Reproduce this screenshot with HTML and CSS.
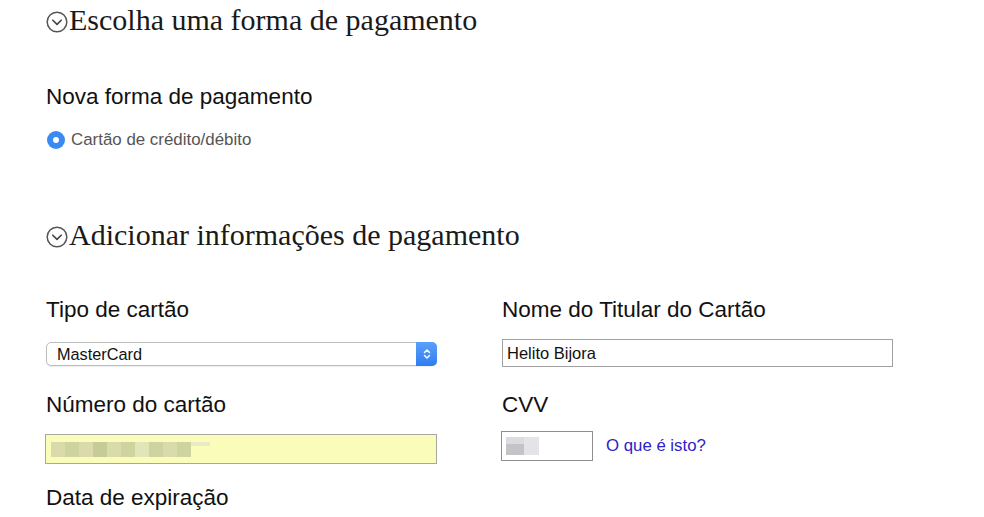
FILE: index.html
```html
<!DOCTYPE html>
<html lang="pt">
<head>
<meta charset="utf-8">
<link rel="stylesheet" href="styles.css">
</head>
<body>
<div class="page">
  <h2 class="section-title"><svg class="chev" viewBox="0 0 22 22"><circle cx="11" cy="11" r="9.8"/><path d="M6.8 9.2 L11 13.4 L15.2 9.2"/></svg>Escolha uma forma de pagamento</h2>
  <h3 class="sub">Nova forma de pagamento</h3>
  <label class="radio-row"><span class="radio"><span class="dot"></span></span>Cartão de crédito/débito</label>

  <h2 class="section-title second"><svg class="chev" viewBox="0 0 22 22"><circle cx="11" cy="11" r="9.8"/><path d="M6.8 9.2 L11 13.4 L15.2 9.2"/></svg>Adicionar informações de pagamento</h2>

  <div class="grid">
    <div class="field f-top">
      <div class="label">Tipo de cartão</div>
      <div class="select"><span class="sel-text">MasterCard</span><span class="sel-btn"><svg viewBox="0 0 10 14"><path d="M2.5 5.5 L5 3 L7.5 5.5 M2.5 8.5 L5 11 L7.5 8.5"/></svg></span></div>
    </div>
    <div class="field f-top">
      <div class="label">Nome do Titular do Cartão</div>
      <div class="input name">Helito Bijora</div>
    </div>
    <div class="field f-mid">
      <div class="label">Número do cartão</div>
      <div class="input card"><span class="blur b1"></span><span class="blur b2"></span><span class="blur b1"></span><span class="blur b3"></span><span class="blur b1"></span><span class="blur b2"></span><span class="blur b5"></span><span class="blur b2"></span><span class="blur b1"></span><span class="blur b2"></span><span class="blur b4"></span></div>
    </div>
    <div class="field f-mid">
      <div class="label">CVV</div>
      <div class="cvv-row"><div class="input cvv"><span class="cblur"><span class="cb-l"></span><span class="cb-r"></span></span></div><a class="link" href="#">O que é isto?</a></div>
    </div>
    <div class="field">
      <div class="label">Data de expiração</div>
    </div>
  </div>
</div>
</body>
</html>
```
FILE: styles.css
```css
html, body { margin: 0; padding: 0; background: #fff; }
body { font-family: "Liberation Sans", Arial, sans-serif; color: #111; }
.page { padding: 0 0 0 46px; }
.section-title {
  font-family: "Liberation Serif", "Times New Roman", serif;
  font-weight: normal;
  font-size: 30px;
  color: #1a1a1a;
  margin: 0;
  padding-top: 0;
  height: 40px;
  display: flex;
  align-items: center;
}
.section-title.second { margin-top: 66px; }
.chev { width: 22px; height: 22px; margin-right: 1px; flex: none; position: relative; top: 2px; }
.chev circle { fill: none; stroke: #555; stroke-width: 1.5; }
.chev path { fill: none; stroke: #444; stroke-width: 1.6; stroke-linecap: round; stroke-linejoin: round; }
.sub { font-weight: normal; font-size: 22.5px; margin: 45px 0 0; line-height: 24px; color: #111; }
.radio-row { display: flex; align-items: center; margin-top: 22px; font-size: 16.9px; color: #555; height: 18px; }
.radio { width: 18px; height: 18px; border-radius: 50%; background: #3b8af2; display: flex; align-items: center; justify-content: center; margin: 0 6px 0 1px; }
.dot { width: 6px; height: 6px; border-radius: 50%; background: #fff; }
.grid { display: grid; grid-template-columns: 390px 390px; column-gap: 66px; margin-top: 43px; }
.label { font-size: 22.5px; line-height: 24px; color: #111; }
.f-top { height: 95px; }
.f-mid { height: 93px; }
.select {
  margin-top: 20px; height: 24px; box-sizing: border-box; width: 391px;
  border: 1px solid #bcbcbc; border-radius: 5px; display: flex; align-items: center;
  background: #fff; box-shadow: 0 1px 1px rgba(0,0,0,0.08);
}
.sel-text { flex: 1; font-size: 16.3px; padding-left: 10px; color: #111; }
.sel-btn { width: 21px; height: 24px; margin: -1px -1px -1px 0; background: linear-gradient(#5aa0fb, #2f7cf0); border-radius: 0 5px 5px 0; display: flex; align-items: center; justify-content: center; }
.sel-btn svg { width: 10px; height: 14px; }
.sel-btn path { fill: none; stroke: #fff; stroke-width: 1.5; stroke-linecap: round; stroke-linejoin: round; }
.input { box-sizing: border-box; border: 1px solid #a0a0a0; background: #fff; display: flex; align-items: center; font-size: 16.5px; color: #111; }
.name { margin-top: 17px; height: 28px; width: 391px; padding-left: 4px; }
.card { margin-top: 17px; height: 30px; width: 392px; margin-left: -1px; background: #fafdb9; border-color: #a8a8a0; padding-left: 5px; }
.blur { display: inline-block; height: 15px; width: 14px; background: #d9dcaa; }
.blur.b2 { background: #cfd3a0; }
.blur.b3 { background: #c7cb98; }
.blur.b5 { background: #e2e5b8; }
.blur.b4 { background: #e8ebc6; width: 19px; height: 4px; align-self: flex-start; margin-top: 7px; }
.cvv-row { display: flex; align-items: center; margin-top: 14px; }
.cvv { width: 92px; height: 30px; margin-left: -1px; padding-left: 4px; border-color: #8e8e8e; }
.cblur { display: flex; height: 18px; }
.cb-l { width: 18px; background: linear-gradient(#dcdce0 0 40%, #c4c4c8 40%); }
.cb-r { width: 15px; background: #e4e4e8; }
.link { color: #2b22c8; font-size: 16.8px; text-decoration: none; margin-left: 13px; }
```
